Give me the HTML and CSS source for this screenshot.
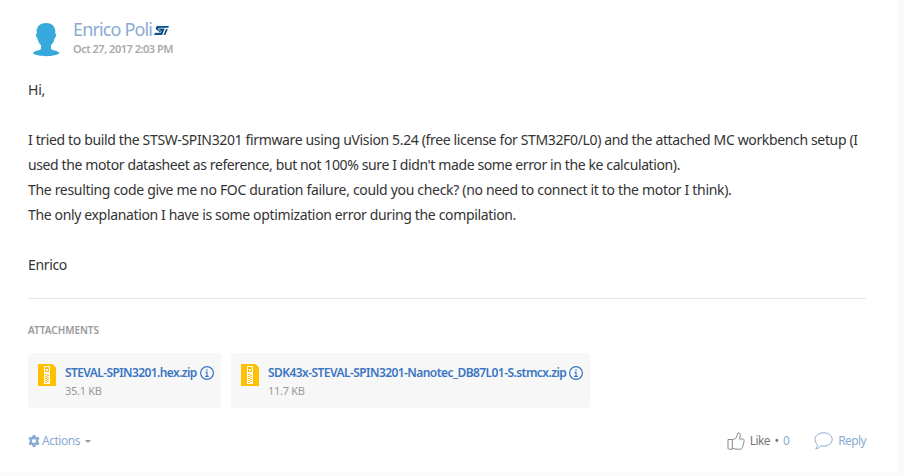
FILE: index.html
```
<!DOCTYPE html>
<html lang="en">
<head>
<meta charset="utf-8">
<title>Discussion reply</title>
<link rel="stylesheet" href="styles.css">
</head>
<body>
<article class="card">
  <header class="author">
    <svg class="avatar" viewBox="0 0 36 36"><path fill="#38a9dc" d="M18 2c5.600 0 9.300 3.500 9.300 8.300v2.500c1.300.5 1 3.200-.7 4.500-.6 3-1.700 5.200-3.600 6.900v3.300c0 2 7.200 2 8.600 4.500C27 36.200 9 36.200 4.800 32c1.400-2.500 8.200-2.500 8.200-4.500v-3.300c-1.900-1.700-3-3.900-3.600-6.900-1.700-1.300-2-4-.7-4.500v-2.500C8.700 5.500 12.400 2 18 2z"/></svg>
    <div>
      <div class="name-row"><a class="name">Enrico Poli</a>
        <svg class="st" viewBox="0 0 15 9"><path fill="#075088" d="M3.200 0H15l-.9 2.100h-3.300L8.200 9H0l1.200-2.400h3.200c1.300 0 1-1 .1-1.500L2.700 3.900C1.300 2.900 1.500.9 3.200 0zM12 3h1.800l-2.500 6H9.600z"/><path fill="none" stroke="#fff" stroke-width=".7" d="M14.500 2.200H5.600c-1.700 0-1.500 1.100-.6 1.600l1.300.8c1.200.8.900 2-.6 2H.5"/></svg>
      </div>
      <div class="date">Oct 27, 2017 2:03 PM</div>
    </div>
  </header>
  <div class="message">
    <p class="hi">Hi,</p>
    <p><span class="l1">I tried to build the STSW-SPIN3201 firmware using uVision 5.24 (free license for STM32F0/L0) and the attached MC workbench setup (I</span><br>
    <span class="l2">used the motor datasheet as reference, but not 100% sure I didn't made some error in the ke calculation).</span><br>
    <span class="l3">The resulting code give me no FOC duration failure, could you check? (no need to connect it to the motor I think).</span><br>
    <span class="l4">The only explanation I have is some optimization error during the compilation.</span></p>
    <p>Enrico</p>
  </div>
  <section class="attachments">
    <h2>ATTACHMENTS</h2>
    <div class="files">
      <div class="file first">
        <svg class="zip" viewBox="0 0 18 22"><path fill="#ffc000" d="M0 0h14.500L18 3.500V22H0z"/><path fill="#fff" d="M6 2h6v18H6z"/><path fill="#ffc000" d="M7 3h4v5H7zM7 10h2v1H7zM9 11h2v1H9zM7 12h2v1H7zM9 13h2v1H9zM7 14h2v1H7zM9 15h2v1H9zM7 16h2v1H7zM9 17h2v1H9zM7 18h2v1H7z"/><path fill="#fff" d="M8 5h2v2H8z"/></svg>
        <div class="info"><div class="title-row"><a class="title">STEVAL-SPIN3201.hex.zip</a>
          <svg class="i" viewBox="0 0 14 14"><circle cx="7" cy="7" r="6.400"/><path d="M7 3.200v1.500M5.500 6.300H7v4M5.200 10.300h3.600"/></svg></div>
          <div class="size">35.1 KB</div></div>
      </div>
      <div class="file second">
        <svg class="zip" viewBox="0 0 18 22"><path fill="#ffc000" d="M0 0h14.500L18 3.500V22H0z"/><path fill="#fff" d="M6 2h6v18H6z"/><path fill="#ffc000" d="M7 3h4v5H7zM7 10h2v1H7zM9 11h2v1H9zM7 12h2v1H7zM9 13h2v1H9zM7 14h2v1H7zM9 15h2v1H9zM7 16h2v1H7zM9 17h2v1H9zM7 18h2v1H7z"/><path fill="#fff" d="M8 5h2v2H8z"/></svg>
        <div class="info"><div class="title-row"><a class="title">SDK43x-STEVAL-SPIN3201-Nanotec_DB87L01-S.stmcx.zip</a>
          <svg class="i" viewBox="0 0 14 14"><circle cx="7" cy="7" r="6.400"/><path d="M7 3.200v1.500M5.500 6.300H7v4M5.200 10.300h3.600"/></svg></div>
          <div class="size">11.7 KB</div></div>
      </div>
    </div>
  </section>
  <footer class="bar">
    <a class="actions">
      <svg class="gear" viewBox="0 0 12 12"><path fill="#8aaad4" fill-rule="evenodd" d="M4.800 0h2.400l.4 1.600 1 .6 1.700-.5 1.200 2.100L10.300 5v2l1.200 1.200-1.200 2.100-1.700-.5-1 .6-.4 1.600H4.800l-.4-1.600-1-.6-1.700.5L.5 8.200 1.700 7V5L.5 3.800l1.200-2.100 1.700.5 1-.6zM6 3.900a2.100 2.100 0 1 0 0 4.200 2.100 2.100 0 0 0 0-4.200z"/></svg>
      <span>Actions</span><i class="caret"></i>
    </a>
    <div class="social">
      <svg class="thumb" viewBox="0 0 18 19"><path d="M1 7.500h4.300v9.700H1.800Q1 17.200 1 16.300zM5.300 8.200c2.500-.8 4.200-2.300 4.800-4.800l.5-2.200c1.400-.9 2.800.3 2.700 2L12.600 7h3.200c1.200 0 1.600 1.100 1 2 .4.700.3 1.500-.3 2 .3.800.1 1.500-.5 2 .2.800-.1 1.500-.7 1.900.1 1.300-.5 2.200-1.800 2.300H9.300c-1.500 0-2.300-.9-4-.9"/></svg>
      <span class="like">Like</span><span class="dot">•</span><span class="count">0</span>
      <svg class="bubble" viewBox="0 0 19 18"><path d="M9.800.8c4.800 0 8.400 2.900 8.400 6.600s-3.600 6.700-8.400 6.700c-1 0-2-.1-2.900-.4-1.400 1.800-3 2.900-5.100 3.100 1-1.200 1.600-2.600 1.500-4.600C1.800 11 .9 9.300.9 7.400.9 3.700 5 .8 9.800.8z"/></svg>
      <span class="reply">Reply</span>
    </div>
  </footer>
</article>
</body>
</html>
```
FILE: styles.css
```
* { box-sizing: border-box; }
body { margin: 0; height: 476px; background: #fafafa; font-family: "Noto Sans", "Open Sans", sans-serif; color: #333; }
svg { display: block; flex: none; }
.card { width: 897px; height: 472px; padding: 19px 31px 0 28px; background: #fff; border-radius: 0 0 4px 0; white-space: nowrap; }

.author { display: flex; gap: 9px; height: 58px; }
.avatar { width: 36px; height: 36px; margin-top: 2px; }
.name-row { display: flex; align-items: center; gap: 2px; height: 20px; }
.name { font-size: 18px; line-height: 20px; letter-spacing: -0.862px; color: #8aaad4; }
.st { width: 15px; height: 9px; margin-top: 2px; }
.date { margin-top: 1px; font-size: 11px; line-height: 18px; font-weight: 600; letter-spacing: -0.49px; color: #aaa; }

.message { height: 222px; border-bottom: 1px solid #e5e5e5; font-size: 14px; line-height: 25px; }
.message p { margin: 0 0 25px; letter-spacing: -0.337px; }
.message .hi { letter-spacing: -0.246px; }
.l1 { letter-spacing: -0.357px; }
.l2 { letter-spacing: -0.388px; }
.l3 { letter-spacing: -0.32px; }
.l4 { letter-spacing: -0.353px; }

.attachments h2 { margin: 23px 0 15px; font-size: 10px; line-height: 16px; font-weight: 600; letter-spacing: -0.032px; color: #999; }
.files { display: flex; gap: 10px; }
.file { display: flex; gap: 9px; height: 55px; padding: 11px 0 0 10px; background: #f7f7f7; border-radius: 4px; }
.first { width: 193px; }
.second { width: 359px; }
.zip { width: 18px; height: 22px; }
.title-row { display: flex; align-items: center; gap: 3px; height: 18px; }
.title { font-size: 12px; line-height: 18px; font-weight: 600; letter-spacing: -0.6px; color: #3a75c4; }
.second .title { letter-spacing: -0.565px; }
.i { width: 14px; height: 14px; fill: none; stroke: #3a75c4; stroke-width: 1.2; }
.size { font-size: 11px; line-height: 18px; letter-spacing: -0.3px; color: #999; }

.bar { display: flex; justify-content: space-between; align-items: center; height: 22px; margin-top: 22px; font-size: 12px; line-height: 22px; }
.actions { display: flex; align-items: center; gap: 2px; color: #8aaad4; letter-spacing: -0.469px; }
.gear { width: 12px; height: 12px; }
.caret { margin-left: 3px; border: solid transparent; border-width: 3px 3.5px 0; border-top-color: #999; }
.social { display: flex; align-items: center; letter-spacing: -0.6px; color: #8aaad4; }
.thumb { width: 18px; height: 19px; margin-right: 5px; fill: none; stroke: #888; stroke-width: 1; }
.like { color: #777; }
.dot { width: 13px; text-align: center; color: #777; font-size: 12px; }
.bubble { width: 19px; height: 18px; margin: 0 5px 0 25px; fill: none; stroke: #8aaad4; stroke-width: 1; }
```
